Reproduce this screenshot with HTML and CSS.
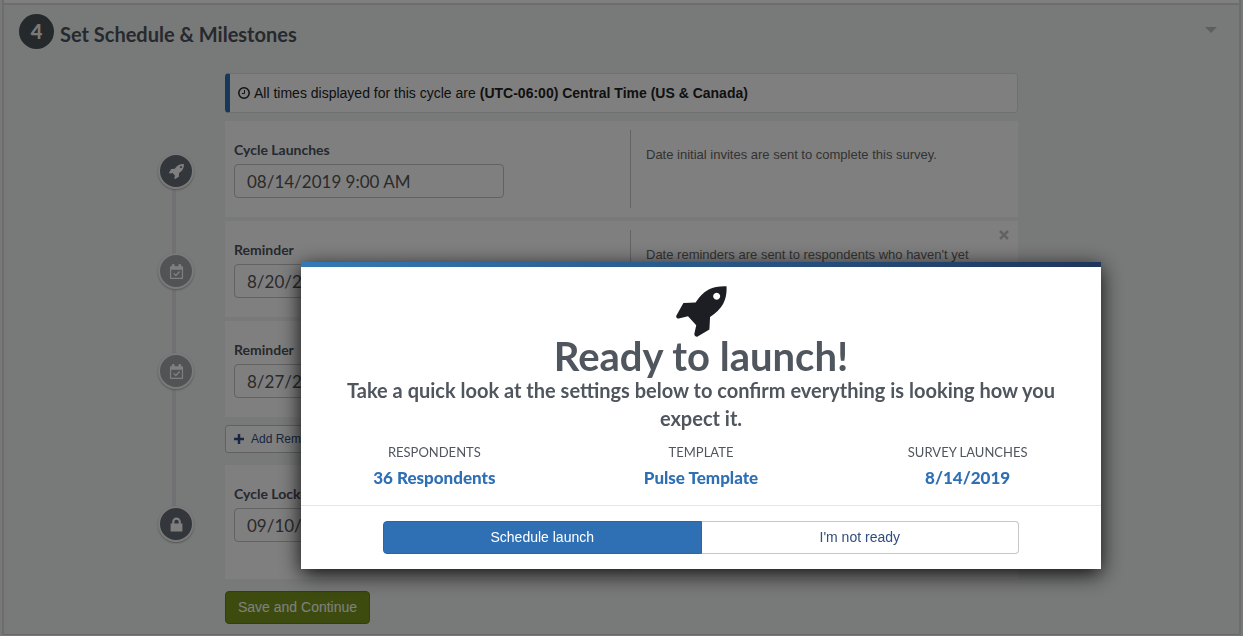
FILE: index.html
```html
<!DOCTYPE html>
<html lang="en">
<head>
<meta charset="utf-8">
<title>Set Schedule &amp; Milestones</title>
<link rel="stylesheet" href="styles.css">
</head>
<body>
<svg class="sprite" aria-hidden="true">
  <symbol id="rocket" viewBox="48 32 154 155"><path fill-rule="evenodd" d="M201 33Q203 62 191 86Q179 108 151 126L149 164L112 186Q104 187 103 179L109 151L84 124L56 131Q48 131 48 123L70 84L107 82Q126 54 147 43Q169 32 201 33ZM171 52.500a10.500 10.500 0 1 0 .1 0Z"/></symbol>
  <symbol id="calendar" viewBox="0 0 16 16"><path fill-rule="evenodd" d="M1 3.500Q1 2.500 2 2.500H3V1.500Q3 0 4.500 0T6 1.500V2.500H10V1.500Q10 0 11.500 0T13 1.500V2.500H14Q15 2.500 15 3.500V15Q15 16 14 16H2Q1 16 1 15ZM2.300 6V14.700H13.700V6Z"/><path d="M5 10l2.300 2.300L11.300 8" fill="none" stroke="currentColor" stroke-width="1.500"/></symbol>
  <symbol id="lock" viewBox="0 0 12 14"><path fill-rule="evenodd" d="M2 6V4.500a4 4 0 0 1 8 0V6H11.500V13.500H.5V6ZM4 6H8V4.500a2 2 0 0 0-4 0Z"/></symbol>
</svg>
<main class="page">
  <section class="panel">
    <header class="panel-head">
      <span class="step">4</span>
      <h2 class="panel-title">Set Schedule &amp; Milestones</h2>
      <button class="collapse" type="button" aria-label="Collapse section"></button>
    </header>
    <div class="content">
      <p class="notice">
        <svg class="clock" viewBox="0 0 12 12" aria-hidden="true"><circle cx="6" cy="6" r="5.200"/><path d="M6.500 3v3.500H4"/></svg>
        All times displayed for this cycle are <strong>(UTC-06:00) Central Time (US &amp; Canada)</strong>
      </p>
      <div class="timeline">
        <div class="milestone">
          <span class="badge"><svg class="badge-icon"><use href="#rocket"/></svg></span>
          <div class="card">
            <div class="field">
              <label for="launch">Cycle Launches</label>
              <input id="launch" type="text" value="08/14/2019 9:00 AM">
            </div>
            <p class="hint">Date initial invites are sent to complete this survey.</p>
          </div>
        </div>
        <div class="milestone">
          <span class="badge badge-muted"><svg class="badge-icon"><use href="#calendar"/></svg></span>
          <div class="card">
            <div class="field">
              <label for="reminder-1">Reminder</label>
              <input id="reminder-1" type="text" value="8/20/2019 9:00 AM">
            </div>
            <p class="hint">Date reminders are sent to respondents who haven't yet completed the survey.</p>
            <button class="remove" type="button" aria-label="Remove reminder"><svg viewBox="0 0 10 10"><path d="M1 1l8 8M9 1l-8 8"/></svg></button>
          </div>
        </div>
        <div class="milestone">
          <span class="badge badge-muted"><svg class="badge-icon"><use href="#calendar"/></svg></span>
          <div class="card">
            <div class="field">
              <label for="reminder-2">Reminder</label>
              <input id="reminder-2" type="text" value="8/27/2019 9:00 AM">
            </div>
            <p class="hint"></p>
          </div>
        </div>
        <button class="add" type="button"><svg viewBox="0 0 10 10" aria-hidden="true"><path d="M5 0v10M0 5h10"/></svg>Add Reminder</button>
        <div class="milestone milestone-last">
          <span class="badge"><svg class="badge-icon"><use href="#lock"/></svg></span>
          <div class="card">
            <div class="field">
              <label for="locks">Cycle Locks</label>
              <input id="locks" type="text" value="09/10/2019 5:00 PM">
            </div>
            <p class="hint"></p>
          </div>
        </div>
      </div>
      <button class="save" type="button">Save and Continue</button>
    </div>
  </section>
</main>
<div class="overlay">
  <div class="modal" role="dialog" aria-labelledby="modal-title">
    <div class="modal-body">
      <svg class="modal-icon" aria-hidden="true"><use href="#rocket"/></svg>
      <h1 class="modal-title" id="modal-title">Ready to launch!</h1>
      <p class="modal-lead">Take a quick look at the settings below to confirm everything is looking how you expect it.</p>
      <dl class="summary">
        <div><dt>RESPONDENTS</dt><dd>36 Respondents</dd></div>
        <div><dt>TEMPLATE</dt><dd>Pulse Template</dd></div>
        <div><dt>SURVEY LAUNCHES</dt><dd>8/14/2019</dd></div>
      </dl>
    </div>
    <div class="modal-actions">
      <button class="primary" type="button">Schedule launch</button>
      <button class="secondary" type="button">I'm not ready</button>
    </div>
  </div>
</div>
</body>
</html>
```
FILE: styles.css
```css
* { box-sizing: border-box; }
html, body { height: 100%; }
body {
  margin: 0;
  overflow: hidden;
  background: #f1f1f1;
  color: #222;
  font: 14px/20px "Liberation Sans", Arial, sans-serif;
}
h1, h2, p, dl, dd { margin: 0; }
button, input { font: inherit; }
svg { display: block; fill: currentColor; }
.sprite { position: absolute; width: 0; height: 0; }

.page {
  margin: 0 2px;
  padding-top: 3px;
  background: #fff;
  border: solid #dadada;
  border-width: 0 2px;
}
.panel {
  padding: 9px 15px 10px;
  background: #f1f4f2;
  border-top: 2px solid #dadada;
  border-bottom: 1px solid #d0d0d0;
}
.panel-head { display: flex; align-items: flex-start; gap: 6px; }
.step {
  width: 35px;
  height: 35px;
  border-radius: 50%;
  background: #4b5257;
  color: #f1f4f2;
  font: 900 20px/34px Lato, sans-serif;
  text-align: center;
}
.panel-title { padding-top: 6px; color: #4c525c; font: 700 20px/28px Lato, sans-serif; }
.collapse {
  width: 12px;
  height: 6px;
  margin: 13px 7px 0 auto;
  padding: 0;
  border: 0;
  background: #bbbdc4;
  clip-path: polygon(0 0, 100% 0, 50% 100%);
}
.content { max-width: 793px; margin: 24px auto 0; }
.notice {
  display: flex;
  align-items: center;
  gap: 4px;
  height: 40px;
  margin-bottom: 8px;
  padding-left: 8px;
  background: #fff;
  border: 1px solid #dfe2e2;
  border-left: 5px solid #2f70b5;
  border-radius: 4px;
}
.clock { width: 12px; height: 12px; fill: none; stroke: currentColor; stroke-width: 1.5; }
.clock path { stroke-width: 1; }

.timeline { position: relative; }
.timeline::before {
  content: "";
  position: absolute;
  top: 50px;
  bottom: 60px;
  left: -53px;
  width: 4px;
  background: #e2e2e6;
}
.milestone {
  display: flex;
  gap: 31px;
  margin: 0 0 4px -67px;
}
.badge {
  position: relative;
  display: grid;
  flex: none;
  place-items: center;
  width: 36px;
  height: 36px;
  margin-top: 32px;
  border: 2px solid #f4f4f4;
  border-radius: 50%;
  background: #666c74;
  color: #fff;
  box-shadow: 0 1px 2px #aaa;
}
.badge-muted { background: #a3a7ab; }
.badge-icon { width: 15px; height: 15px; }
.card {
  position: relative;
  display: grid;
  grid-template-columns: 396px 1fr;
  flex: 1;
  min-height: 96px;
  padding: 9px;
  background: #fff;
}
.field label {
  display: block;
  padding: 10px 0 4px;
  color: #4c525c;
  font: 700 14px/20px Lato, sans-serif;
}
.field input {
  display: block;
  width: 270px;
  height: 34px;
  padding: 0 12px;
  border: 1px solid #c4c4c4;
  border-radius: 4px;
  background: #fff;
  color: #555;
  font: 400 17px/24px Lato, sans-serif;
}
.hint {
  padding: 15px 30px 0 15px;
  border-left: 1px solid #c9c9c9;
  color: #666;
  font-size: 13px;
}
.remove {
  position: absolute;
  top: 9px;
  right: 9px;
  width: 10px;
  height: 10px;
  padding: 0;
  border: 0;
  background: none;
}
.remove path { fill: none; stroke: #c4c4c4; stroke-width: 2.5; }
.add {
  display: flex;
  align-items: center;
  gap: 7px;
  height: 28px;
  margin: 8px 0 12px;
  padding: 0 8px;
  border: 1px solid #bfc2c4;
  border-radius: 3px;
  background: #fff;
  color: #2e4e7e;
  font-size: 12px;
}
.add svg { width: 10px; height: 10px; stroke: currentColor; stroke-width: 2.5; }
.milestone-last { margin-bottom: 12px; }
.milestone-last .badge { margin-top: 41px; }
.milestone-last .card { min-height: 114px; }
.save {
  display: block;
  height: 33px;
  padding: 0 12px 2px;
  border: 1px solid #688015;
  border-radius: 4px;
  background: #7b981d;
  color: #fff;
}

.overlay {
  position: fixed;
  inset: 0;
  display: flex;
  justify-content: center;
  align-items: flex-start;
  padding: 262px 0 0 159px;
  background: rgba(0, 0, 0, .5);
}
.modal {
  width: 800px;
  padding-top: 5px;
  background: linear-gradient(90deg, #337ab7, #1f355b) top / 100% 5px no-repeat, #fff;
  box-shadow: 0 5px 20px rgba(0, 0, 0, .9);
}
.modal-body { padding: 19px 0 13px; color: #50565e; text-align: center; }
.modal-icon { width: 51px; height: 51px; margin: 0 auto; color: #1c1e23; }
.modal-title { font: 700 40px/39px Lato, sans-serif; }
.modal-lead { padding: 0 40px; font: 700 20px/28px Lato, sans-serif; }
.summary {
  display: grid;
  grid-template-columns: repeat(3, 1fr);
  padding-top: 8px;
  font-family: Lato, sans-serif;
}
.summary dt { font-size: 13px; line-height: 24px; }
.summary dd { color: #2f70b5; font-size: 17px; font-weight: 900; line-height: 28px; }
.modal-actions {
  display: flex;
  padding: 15px 82px;
  border-top: 1px solid #e5e5e5;
}
.modal-actions button { flex: 1; height: 33px; padding: 0 0 2px; }
.modal-actions .primary {
  border: 1px solid #2966a8;
  border-radius: 4px 0 0 4px;
  background: #2f70b5;
  color: #fff;
}
.modal-actions .secondary {
  border: 1px solid #c4c8cb;
  border-left: 0;
  border-radius: 0 4px 4px 0;
  background: #fff;
  color: #2e4e7e;
}
```
